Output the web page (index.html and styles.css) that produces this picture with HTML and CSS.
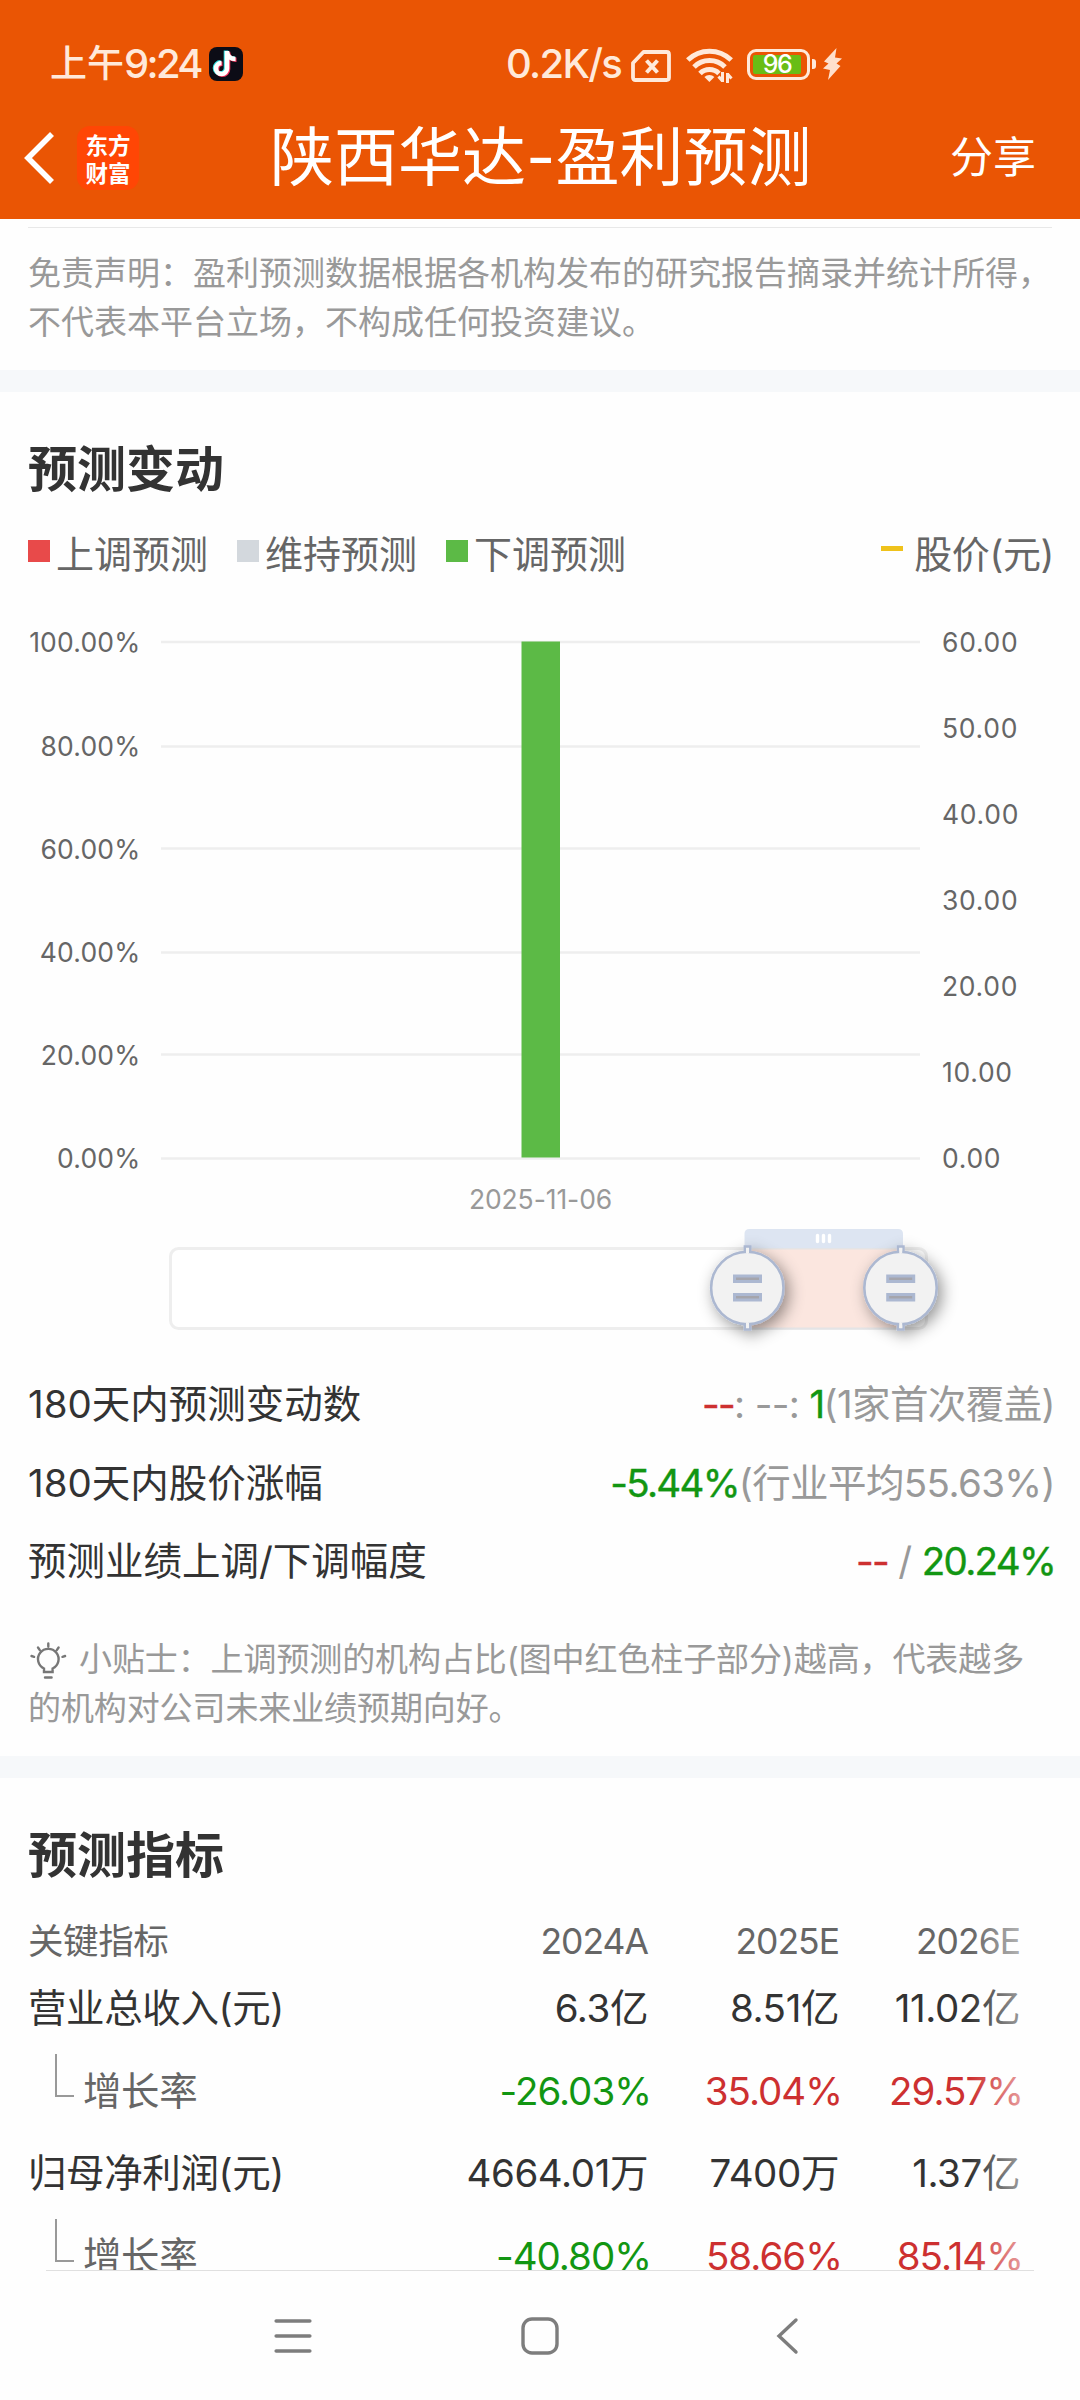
FILE: index.html
```html
<!DOCTYPE html>
<html lang="zh-CN">
<head>
<meta charset="utf-8">
<title>陕西华达-盈利预测</title>
<link rel="stylesheet" href="styles.css">
</head>
<body>
<div class="screen">
  <header class="top">
    <div class="status">
      <div class="status-left">
        <span class="clock"><span class="clock-cn">上午</span><span class="clock-num">9:24</span></span>
        <svg class="note" width="34" height="34" viewBox="0 0 34 34">
          <rect width="34" height="34" rx="8" fill="#0c0c16"/>
          <g fill="none" stroke-width="4.6">
            <path d="M18 4v17.500a5.500 5.500 0 1 1-5.500-5.500M18 5c.5 4.500 4 7 8.500 7" stroke="#2fe0e2" transform="translate(-1 -.6)"/>
            <path d="M18 4v17.500a5.500 5.500 0 1 1-5.500-5.500M18 5c.5 4.500 4 7 8.500 7" stroke="#f5325c" transform="translate(1 .8)"/>
            <path d="M18 4v17.500a5.500 5.500 0 1 1-5.500-5.500M18 5c.5 4.500 4 7 8.500 7" stroke="#fff"/>
          </g>
        </svg>
      </div>
      <div class="status-right">
        <span class="speed">0.2K/s</span>
        <svg class="sim" width="40" height="32" viewBox="0 0 40 32" fill="none" stroke="#ffe9da">
          <path d="M12.500 2H35.500Q38 2 38 4.500V27.500Q38 30 35.500 30H4.500Q2 30 2 27.500V13Z" stroke-width="3.800" stroke-linejoin="round"/>
          <path d="M15.500 10.500l11 12M26.500 10.500l-11 12" stroke-width="4"/>
        </svg>
        <svg class="wifi" width="47" height="36" viewBox="0 0 47 36" fill="none" stroke="#ffe9da" stroke-width="5">
          <path d="M1.800 13a31 31 0 0 1 43.400 0"/>
          <path d="M8 20a22 22 0 0 1 31 0"/>
          <path d="M14 26.500a13.500 13.500 0 0 1 19 0"/>
          <path d="M23.400 35l-5-5a7 7 0 0 1 10 0z" fill="#ffe9da" stroke="none"/>
          <path d="M36.500 25v10M36.500 34l-4-4.500M41.500 36V26M41.500 27l4 4.500" stroke-width="3"/>
        </svg>
        <div class="battery"><span class="level">96</span></div>
        <span class="nub"></span>
        <svg class="bolt" width="19" height="32" viewBox="0 0 19 32" fill="#ffe0cc"><path d="M13.500 0L1 13.500l4.500 2L0 20.500l7 1.500L5 32 17.500 18l-4-2.500L19 10.500l-7-1z"/></svg>
      </div>
    </div>
    <div class="titlebar">
      <svg class="back" width="30" height="52" viewBox="0 0 30 52" fill="none" stroke="#fff" stroke-width="5.600"><path d="M28 2L4 26l24 24"/></svg>
      <div class="brand"><span>东方</span><span>财富</span></div>
      <h1>陕西华达-盈利预测</h1>
      <a class="share">分享</a>
    </div>
  </header>

  <main class="content">
    <section class="disclaimer">
      <p>免责声明：盈利预测数据根据各机构发布的研究报告摘录并统计所得，<br>不代表本平台立场，不构成任何投资建议。</p>
    </section>

    <section class="changes">
      <h2>预测变动</h2>
      <div class="legend">
        <span class="key"><i class="sq up"></i>上调预测</span>
        <span class="key"><i class="sq keep"></i>维持预测</span>
        <span class="key"><i class="sq down"></i>下调预测</span>
        <span class="key price"><i class="dash"></i>股价(元)</span>
      </div>
      <svg class="chart" width="1080" height="770" viewBox="0 590 1080 770">
        <defs>
          <filter id="shadow" x="-50%" y="-50%" width="200%" height="200%"><feDropShadow dx="4" dy="5" stdDeviation="8" flood-color="#000" flood-opacity=".42"/></filter>
        </defs>
        <g stroke="#eee" stroke-width="2.600">
          <path d="M161 642H920M161 746.500H920M161 848.500H920M161 952.500H920M161 1054.500H920M161 1158.500H920"/>
        </g>
        <rect x="521.500" y="641.500" width="38.500" height="516" fill="#5cba46"/>
        <g class="axis left">
          <text x="140.500" y="652">100.00%</text><text x="140.500" y="756">80.00%</text><text x="140.500" y="859">60.00%</text>
          <text x="140.500" y="962">40.00%</text><text x="140.500" y="1065">20.00%</text><text x="140.500" y="1168">0.00%</text>
        </g>
        <g class="axis right">
          <text x="942" y="652">60.00</text><text x="942" y="738">50.00</text><text x="942" y="824">40.00</text><text x="942" y="910">30.00</text>
          <text x="942" y="996">20.00</text><text x="942" y="1082">10.00</text><text x="942" y="1168">0.00</text>
        </g>
        <text class="date" x="540.500" y="1209">2025-11-06</text>
        <rect x="170.500" y="1248.500" width="756" height="80" rx="8" fill="#fff" stroke="#eee" stroke-width="3"/>
        <rect x="747" y="1247" width="154" height="82" fill="#fbe6df"/>
        <path d="M747 1248.500H901M747 1328.500H901" stroke="#e4e4e6" stroke-width="2"/>
        <path d="M744.500 1248V1234q0-5 5-5H898q5 0 5 5V1248z" fill="#dde5f2"/>
        <path d="M817.500 1235.500v6M823.500 1235.500v6M829.500 1235.500v6" stroke="#fff" stroke-width="3.400" stroke-linecap="round"/>
        <g id="h1">
          <g filter="url(#shadow)">
            <rect x="744.800" y="1246.500" width="5.500" height="83" fill="#f2f2f2" stroke="#acb8d1" stroke-width="2.500"/>
            <circle cx="747.300" cy="1288" r="36.200" fill="#f2f2f2" stroke="#acb8d1" stroke-width="2.600"/>
          </g>
          <path d="M747.500 1248v5M747.500 1323v5" stroke="#f2f2f2" stroke-width="3"/>
          <g fill="#a5a5ac" stroke="#acb8d1" stroke-width="3"><rect x="734.500" y="1276" width="26" height="5.500"/><rect x="734.500" y="1294.500" width="26" height="5.500"/></g>
        </g>
        <use href="#h1" x="153.200"/>
      </svg>
      <dl class="stats">
        <div><dt>180天内预测变动数</dt><dd><b class="r">--</b>: --: <b class="g">1</b>(1家首次覆盖)</dd></div>
        <div><dt>180天内股价涨幅</dt><dd><b class="g">-5.44%</b>(行业平均55.63%)</dd></div>
        <div><dt>预测业绩上调/下调幅度</dt><dd><b class="r">--</b> / <b class="g">20.24%</b></dd></div>
      </dl>
      <p class="tip"><svg class="bulb" width="38" height="39" viewBox="0 0 38 39" fill="none" stroke="#777" stroke-width="2.400" stroke-linecap="round"><path d="M14 30v-3.500a10.300 10.300 0 1 1 8.600 0V30zM15 35.500h6.600M18.300 1.500v3M8 5.500l1.800 2.600M28.600 5.500l-1.800 2.600M1.500 14l2.600.8M35.100 14l-2.600.8"/></svg>小贴士：上调预测的机构占比(图中红色柱子部分)越高，代表越多<br>的机构对公司未来业绩预期向好。</p>
    </section>

    <section class="metrics">
      <h2>预测指标</h2>
      <div class="table">
        <div class="row head"><span>关键指标</span><span>2024A</span><span>2025E</span><span>2026E</span></div>
        <div class="row"><span>营业总收入(元)</span><span>6.3亿</span><span>8.51亿</span><span>11.02亿</span></div>
        <div class="row sub"><span><i class="elbow"></i>增长率</span><span class="g">-26.03%</span><span class="r">35.04%</span><span class="r">29.57%</span></div>
        <div class="row"><span>归母净利润(元)</span><span>4664.01万</span><span>7400万</span><span>1.37亿</span></div>
        <div class="row sub"><span><i class="elbow"></i>增长率</span><span class="g">-40.80%</span><span class="r">58.66%</span><span class="r">85.14%</span></div>
        <div class="fade"></div>
      </div>
    </section>
  </main>

  <nav class="navbar">
    <svg width="38" height="38" viewBox="0 0 38 38" stroke="#7d7d7d" stroke-width="3.600" stroke-linecap="round"><path d="M2.200 4H35.800M2.200 19H35.800M2.200 34H35.800"/></svg>
    <svg width="38" height="38" viewBox="0 0 38 38" fill="none" stroke="#7d7d7d" stroke-width="3.400"><rect x="2" y="2" width="34" height="34" rx="9"/></svg>
    <svg width="38" height="38" viewBox="0 0 38 38" fill="none" stroke="#7d7d7d" stroke-width="3.400" stroke-linecap="round"><path d="M28 3L11 19l17 16"/></svg>
  </nav>
</div>
</body>
</html>
```
FILE: styles.css
```css
* { box-sizing: border-box; }
body { margin: 0; background: #fff; font-family: Inter, "Noto Sans CJK SC", sans-serif; color: #333; }
h1, h2, p, dl, dd, dt { margin: 0; }
i { font-style: normal; }
b { font-weight: 400; letter-spacing: -1.500px; -webkit-text-stroke: .4px currentColor; }
.g { color: #129612; }
.r { color: #cd3030; }

.screen { width: 1080px; height: 2400px; overflow: hidden; display: flex; flex-direction: column; background: #fefefe; }

.top { height: 219px; flex: none; background: #ea5504; color: #fff; }
.status { height: 94px; padding: 34px 0 0 50px; display: flex; color: #ffe9da; }
.status-left { width: 458px; height: 60px; display: flex; align-items: center; }
.clock { width: 151px; display: flex; align-items: center; font-weight: 500; line-height: 60px; white-space: nowrap; }
.clock-cn { font-size: 37px; }
.clock-num { font-size: 40px; letter-spacing: -2.700px; }
.note { margin-left: 8px; }
.status-right { height: 60px; display: flex; align-items: center; }
.speed { width: 123px; font-size: 40px; line-height: 60px; font-weight: 500; letter-spacing: -1.700px; white-space: nowrap; text-indent: -2px; }
.sim { margin-top: 3px; }
.wifi { margin: 2px 0 0 15px; }
.battery { margin-left: 14px; width: 63px; height: 31px; border: 3.500px solid #ffe9da; border-radius: 9px; padding: 3px; display: flex; }
.level { width: 48px; background: #69bd15; border-radius: 2px; font-size: 25px; line-height: 19px; text-align: center; color: #fff; font-weight: 500; letter-spacing: -1.500px; }
.nub { width: 4px; height: 10px; margin-left: 2px; border-radius: 0 3px 3px 0; background: #ffe9da; }
.bolt { margin-left: 7px; }

.titlebar { height: 125px; padding: 0 44px 0 24px; display: flex; align-items: center; }
.back { margin-top: 2px; }
.brand { margin: 2px 0 0 23px; width: 62px; height: 64px; border-radius: 13px; background: #ff4605; display: flex; flex-direction: column; align-items: center; justify-content: center; font: 700 22.500px/28px "Noto Sans CJK SC", sans-serif; }
.titlebar h1 { margin-left: 131px; font-size: 64px; font-weight: 400; line-height: 125px; white-space: nowrap; }
.share { margin-left: auto; font-size: 43px; line-height: 60px; }

.content { height: 2051px; flex: none; overflow: hidden; }
.disclaimer { height: 151px; margin: 0 28px; padding-top: 8px; }
.disclaimer p { border-top: 1px solid #e8e8e8; padding-top: 21px; font-size: 33px; line-height: 49px; color: #999; white-space: nowrap; }
h2 { font-size: 49px; line-height: 60px; font-weight: 700; }
.changes { height: 1386px; border-top: 22px solid #f6f8fa; padding-top: 48px; }
.changes h2 { margin-left: 28px; }
.legend { margin: 24px 26px 0 28px; height: 60px; display: flex; gap: 29px; font-size: 38px; line-height: 60px; color: #666; }
.key { display: flex; align-items: center; }
.sq { width: 22px; height: 22px; margin: -6px 6px 0 0; }
.up { background: #e84a4a; }
.keep { background: #d3d8dd; }
.down { background: #5cba46; }
.price { margin-left: auto; letter-spacing: -.4px; }
.dash { width: 22px; height: 5px; margin: -11px 11px 0 0; background: #efc21b; }
.chart { display: block; margin-top: 6px; }
.axis text, .date { font-size: 26.500px; fill: #666; }
.axis.left text { text-anchor: end; letter-spacing: .2px; }
.axis.right text { letter-spacing: .7px; }
.date { text-anchor: middle; fill: #999; letter-spacing: -.1px; }
.stats { margin: 5px 27px 0 28px; }
.stats div { display: flex; justify-content: space-between; height: 78.500px; line-height: 78.500px; font-size: 38.500px; }
.stats dd { color: #999; white-space: pre; letter-spacing: -.6px; margin-right: -2px; }
.stats b { letter-spacing: -1.700px; }
.tip { margin: 34px 28px 0; font-size: 33px; line-height: 49.500px; color: #999; white-space: nowrap; letter-spacing: -.1px; }
.bulb { margin: 0 11px 0 2px; vertical-align: -10px; }

.metrics { border-top: 22px solid #f6f8fa; padding-top: 48px; }
.metrics h2 { margin-left: 28px; }
.table { position: relative; margin-top: 22px; }
.row { height: 82.500px; display: grid; grid-template-columns: 348px 272px 191px 181px; padding-left: 28px; line-height: 82px; font-size: 38.500px; letter-spacing: -.4px; white-space: nowrap; }
.row span + span { text-align: right; }
.row.head { height: 59px; line-height: 67px; font-size: 35.500px; color: #666; }
.row.head span + span { letter-spacing: -1px; }
.row.head, .row.sub > span:first-child { color: #666; }
.row.sub > span:first-child { display: flex; padding-left: 27px; }
.row.sub span + span { letter-spacing: -1px; margin-right: -3px; }
.elbow { width: 19px; height: 43px; margin: 4px 9px 0 0; border: solid #999; border-width: 0 0 2px 2px; }
.fade { position: absolute; top: 0; left: 970px; width: 60px; height: 100%; background: linear-gradient(90deg, #fefefe00, #fefefe99); }

.navbar { height: 130px; width: 988px; margin-left: 46px; border-top: 1px solid #e0e0e0; padding: 46px 0 0 228px; display: flex; gap: 209px; }
```
